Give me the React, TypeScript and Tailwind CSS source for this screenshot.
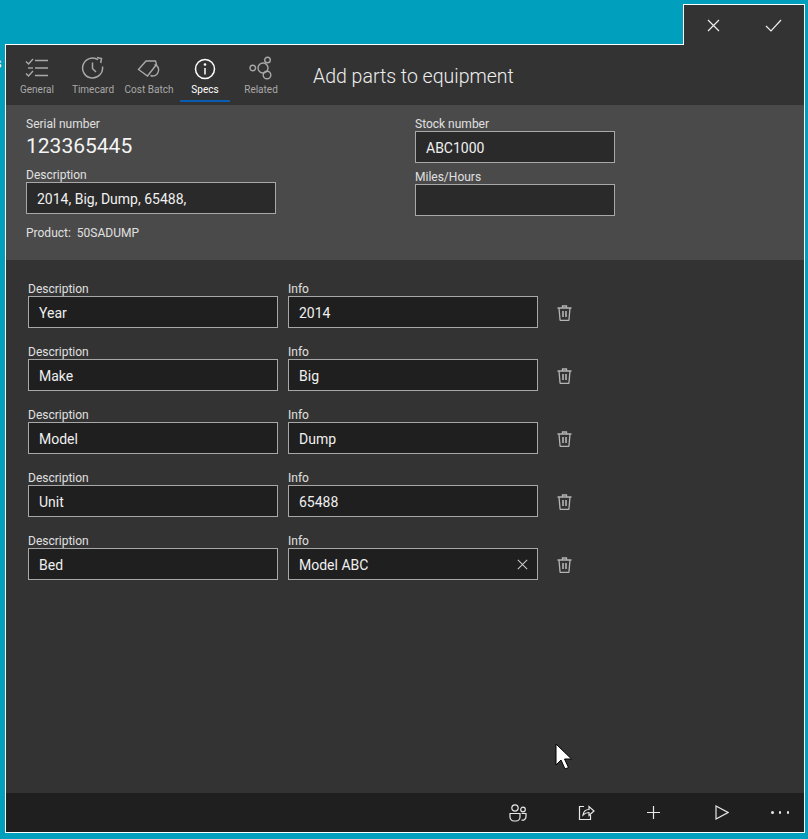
const font = { fontFamily: 'Roboto, "Open Sans", sans-serif' };

const GeneralIcon = () => (
  <svg width="26" height="24" viewBox="0 0 26 24" fill="none" stroke="currentColor" strokeWidth="1.4">
    <path d="M2 5.500l2.500 2.500L9 3" />
    <path d="M2 17.500l2.500 2.500L9 15" />
    <path d="M11 4.500h13M11 12h13M11 19.500h13" />
    <path d="M4 12h5" />
  </svg>
);

const TimecardIcon = () => (
  <svg width="24" height="24" viewBox="0 0 24 24" fill="none" stroke="currentColor" strokeWidth="1.5">
    <path d="M21.500 10.500A10 10 0 1 1 17 3.600" />
    <path d="M11.500 6.500v6l3.500 3.500" />
    <path d="M16 1.500l4.500 1-.8 4.500" />
  </svg>
);

const CostBatchIcon = () => (
  <svg width="24" height="24" viewBox="0 0 24 24" fill="none" stroke="currentColor" strokeWidth="1.4">
    <path d="M1.500 13.500L9 5h9.500l1 3.500L10.500 20z" />
    <path d="M17.500 8.500a5.500 5.500 0 0 1 3.500 8 5.500 5.500 0 0 1-7.500 3" />
  </svg>
);

const SpecsIcon = () => (
  <svg width="22" height="22" viewBox="0 0 22 22" fill="none" stroke="currentColor" strokeWidth="1.5">
    <circle cx="11" cy="11" r="9.500" />
    <path d="M11 10v6.500" />
    <circle cx="11" cy="6.500" r="0.6" fill="currentColor" />
  </svg>
);

const RelatedIcon = () => (
  <svg width="24" height="24" viewBox="0 0 24 24" fill="none" stroke="currentColor" strokeWidth="1.4">
    <circle cx="3.800" cy="12" r="2.800" />
    <circle cx="14" cy="12" r="5" />
    <circle cx="18.500" cy="4" r="2.800" />
    <circle cx="18" cy="19" r="3.800" />
  </svg>
);

const CloseIcon = ({ size = 13 }: { size?: number }) => (
  <svg width={size} height={size} viewBox="0 0 13 13" fill="none" stroke="currentColor" strokeWidth="1.2">
    <path d="M1 1l11 11M12 1L1 12" />
  </svg>
);

const CheckIcon = () => (
  <svg width="17" height="13" viewBox="0 0 17 13" fill="none" stroke="currentColor" strokeWidth="1.2">
    <path d="M1 7l5 5L16 1" />
  </svg>
);

const TrashIcon = () => (
  <svg width="15" height="16" viewBox="0 0 15 16" fill="none" stroke="currentColor" strokeWidth="1.3">
    <path d="M0.500 3h14M5.500 3V1h4v2" />
    <path d="M2 3l1 11.500c0 .5.5 1 1 1h7c.5 0 1-.5 1-1L13 3" />
    <path d="M6 6v6M9 6v6" strokeWidth="1.6" />
  </svg>
);

const PeopleIcon = () => (
  <svg width="18" height="18" viewBox="0 0 18 18" fill="none" stroke="currentColor" strokeWidth="1.2">
    <circle cx="6" cy="4" r="3.200" />
    <circle cx="14" cy="5.500" r="2.300" />
    <path d="M1 9.500h10v3.500a4 4 0 0 1-4 4H5a4 4 0 0 1-4-4z" />
    <path d="M12.500 9.500h4.500v3a3.500 3.500 0 0 1-4.500 3.500" />
  </svg>
);

const ShareIcon = () => (
  <svg width="17" height="17" viewBox="0 0 17 17" fill="none" stroke="currentColor" strokeWidth="1.2">
    <path d="M6 2.500H1.500v13h11V11" />
    <path d="M5 11c.5-3.500 3-5.500 6-5.500V2.500L16 7l-5 4.500V8.500c-2.500 0-4.500 1-6 2.500z" />
  </svg>
);

const PlusIcon = () => (
  <svg width="13" height="13" viewBox="0 0 13 13" fill="none" stroke="currentColor" strokeWidth="1.2">
    <path d="M6.500 0v13M0 6.500h13" />
  </svg>
);

const PlayIcon = () => (
  <svg width="14" height="15" viewBox="0 0 14 15" fill="none" stroke="currentColor" strokeWidth="1.2">
    <path d="M1 1l12 6.500L1 14z" />
  </svg>
);

const tabs = [
  { label: "General", icon: <GeneralIcon /> },
  { label: "Timecard", icon: <TimecardIcon /> },
  { label: "Cost Batch", icon: <CostBatchIcon /> },
  { label: "Specs", icon: <SpecsIcon />, active: true },
  { label: "Related", icon: <RelatedIcon /> },
];

const specs = [
  { description: "Year", info: "2014" },
  { description: "Make", info: "Big" },
  { description: "Model", info: "Dump" },
  { description: "Unit", info: "65488" },
  { description: "Bed", info: "Model ABC", clear: true },
];

const Field = ({
  label,
  value,
  width = "w-[250px]",
  bg = "bg-[#1f1f1f]",
  clear,
}: {
  label: string;
  value: string;
  width?: string;
  bg?: string;
  clear?: boolean;
}) => (
  <div className={width}>
    <div className="h-[15px] text-[12px] leading-[17px] text-[#e0e0e0]">{label}</div>
    <div
      className={`flex h-[32px] items-center justify-between border border-[#a8a8a8] pl-[10px] pr-[9px] pt-[2px] text-[14px] text-[#f0f0f0] ${bg}`}
    >
      <span>{value}</span>
      {clear && (
        <span className="-mt-[2px] text-[#cccccc]">
          <CloseIcon size={11} />
        </span>
      )}
    </div>
  </div>
);

export default function App() {
  return (
    <div style={font} className="relative h-[839px] w-[808px] overflow-hidden bg-[#009fbd] pl-[5px] pt-[4px]">
      <div className="absolute left-0 top-[56px] w-[3px] overflow-hidden text-[15px] leading-[15px] text-white">
        <span className="-ml-[6px] block">s</span>
      </div>

      <div className="relative z-10 -mb-px ml-[678px] flex h-[41px] w-[122px] items-center justify-between border border-b-0 border-white bg-[#333333] pl-[23px] pr-[22px] text-[#eeeeee]">
        <CloseIcon />
        <CheckIcon />
      </div>

      <div className="flex h-[789px] w-[800px] flex-col border border-white bg-[#333333]">
        <div className="flex h-[60px] shrink-0 items-start pl-[3px]">
          <div className="flex">
            {tabs.map((tab) => (
              <div
                key={tab.label}
                className={`flex w-[56px] flex-col items-center ${tab.active ? "text-white" : "text-[#a9a9a9]"}`}
              >
                <div className="flex h-[36px] items-end pb-px">{tab.icon}</div>
                <div className="h-[15px] whitespace-nowrap text-[10px] leading-[17px]">{tab.label}</div>
                <div className={`mt-[4px] h-[2px] w-[50px] ${tab.active ? "bg-[#0a5cb0]" : ""}`} />
              </div>
            ))}
          </div>
          <h1 className="ml-[24px] mt-[17px] text-[19.5px] leading-[30px] font-light text-[#eeeeee]">
            Add parts to equipment
          </h1>
        </div>

        <div className="flex h-[155px] shrink-0 bg-[#4a4a4a] pl-[20px] pt-[11px]">
          <div className="w-[389px]">
            <div className="h-[15px] text-[12px] leading-[17px] text-[#e0e0e0]">Serial number</div>
            <div className="h-[36px] text-[21px] leading-[31px] text-[#f4f4f4]">123365445</div>
            <Field label="Description" value="2014, Big, Dump, 65488," bg="bg-[#2a2a2a]" />
            <div className="mt-[11px] text-[12px] leading-[17px] text-[#e0e0e0]">Product:&nbsp; 50SADUMP</div>
          </div>
          <div className="flex flex-col gap-[6px]">
            <Field label="Stock number" value="ABC1000" width="w-[200px]" bg="bg-[#2a2a2a]" />
            <Field label="Miles/Hours" value="" width="w-[200px]" bg="bg-[#2a2a2a]" />
          </div>
        </div>

        <div className="flex flex-1 flex-col gap-[16px] pl-[22px] pt-[21px]">
          {specs.map((spec) => (
            <div key={spec.description} className="flex items-end gap-[10px]">
              <Field label="Description" value={spec.description} />
              <Field label="Info" value={spec.info} clear={spec.clear} />
              <div className="ml-[9px] flex h-[30px] items-center text-[#b4b4b4]">
                <TrashIcon />
              </div>
            </div>
          ))}
        </div>

        <div className="flex h-[39px] shrink-0 items-center justify-end bg-[#1f1f1f] pr-[15px] text-[#e8e8e8]">
          <div className="flex w-[18px] justify-center"><PeopleIcon /></div>
          <div className="ml-[50px] flex w-[18px] justify-center"><ShareIcon /></div>
          <div className="ml-[49px] flex w-[18px] justify-center"><PlusIcon /></div>
          <div className="ml-[51px] flex w-[18px] justify-center"><PlayIcon /></div>
          <div className="ml-[40px] flex w-[18px] justify-between">
            <span className="size-[2.5px] rounded-full bg-[#e8e8e8]" />
            <span className="size-[2.5px] rounded-full bg-[#e8e8e8]" />
            <span className="size-[2.5px] rounded-full bg-[#e8e8e8]" />
          </div>
        </div>
      </div>

      <svg className="absolute left-[555px] top-[743px]" width="18" height="28" viewBox="0 0 18 28">
        <path d="M1 1v21l5-5 4 9 3.500-1.500-4-8.500h7z" fill="#ffffff" stroke="#000000" strokeWidth="1" />
      </svg>
    </div>
  );
}
